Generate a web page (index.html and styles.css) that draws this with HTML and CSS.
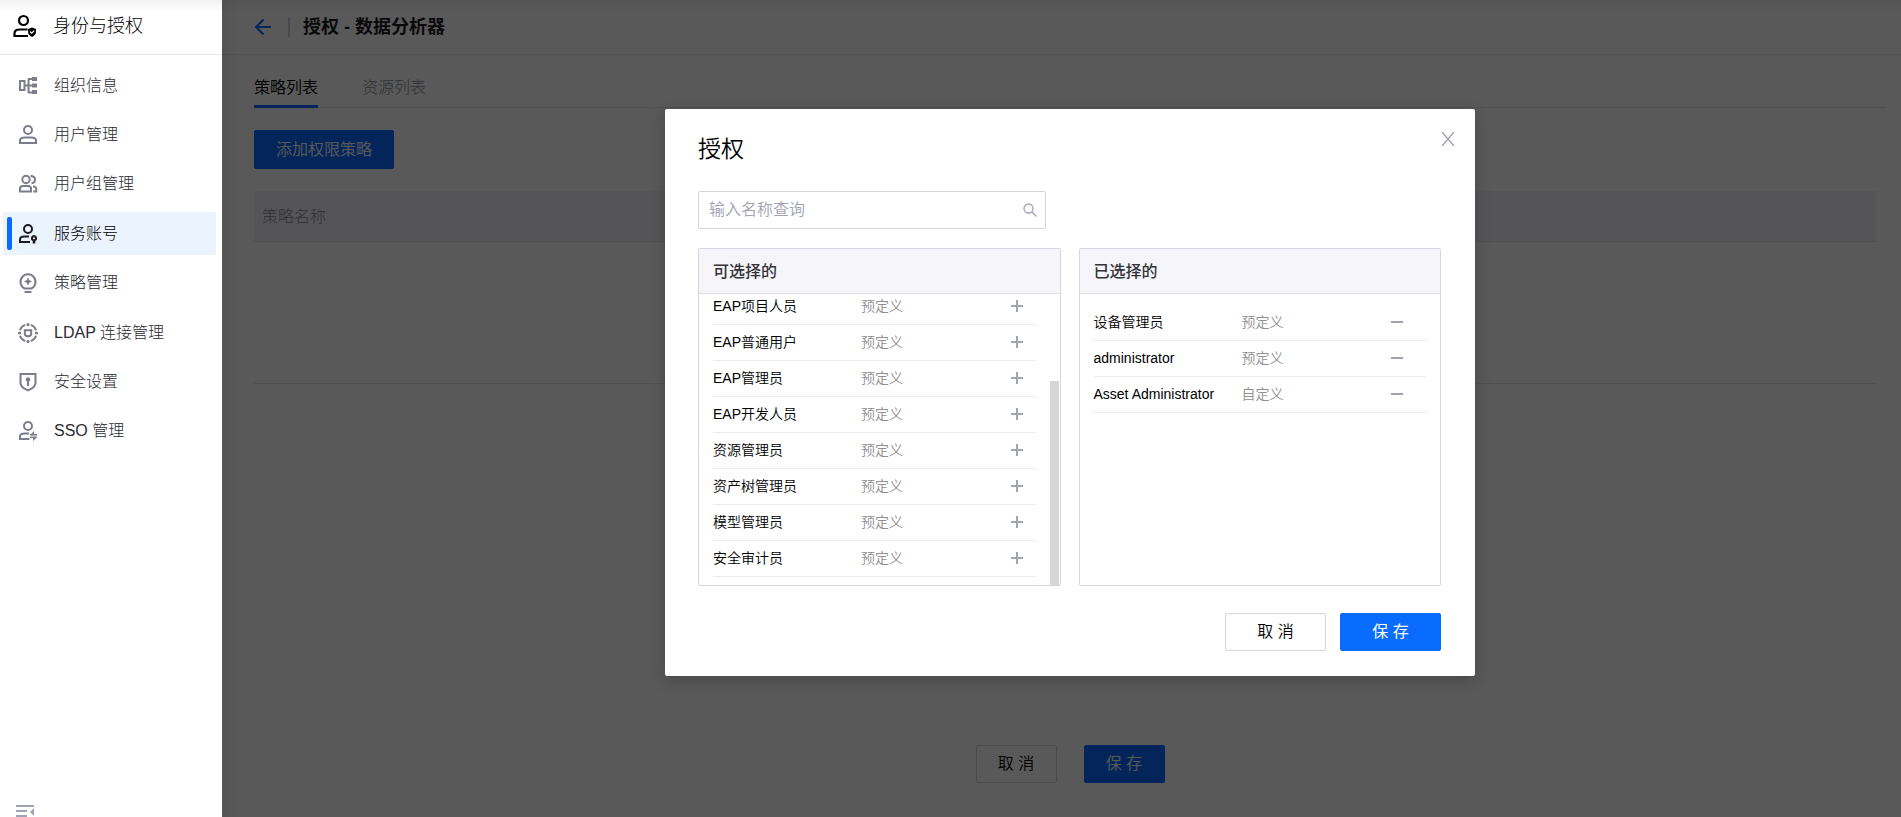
FILE: index.html
```html
<!DOCTYPE html>
<html lang="zh-CN">
<head>
<meta charset="utf-8">
<meta name="viewport" content="width=device-width, initial-scale=1">
<title>授权 - 数据分析器</title>
<link rel="stylesheet" href="styles.css">
</head>
<body>
<svg class="defs" aria-hidden="true">
  <symbol id="i-plus" viewBox="0 0 12 12"><path d="M6 0v12M0 6h12" stroke="currentColor" stroke-width="2" fill="none"/></symbol>
  <symbol id="i-minus" viewBox="0 0 12 12"><path d="M0 6h12" stroke="currentColor" stroke-width="2" fill="none"/></symbol>
</svg>
<div class="app">
  <aside class="sidebar">
    <div class="brand">
      <svg class="brand-icon" viewBox="0 0 24 24" fill="none" stroke="currentColor" stroke-width="2.200">
        <circle cx="10.500" cy="6.500" r="4.500"/>
        <path d="M15 22H1.500v-2.500C1.500 17 3.500 15.500 6.500 15.500h8"/>
        <path d="M19 13.500l4 1.500v2.700c0 2.300-1.500 4.200-4 5.300-2.500-1.100-4-3-4-5.300V15z" fill="currentColor" stroke="none"/>
        <path d="M17 17.500l1.700 1.700 2.600-2.600" stroke="#fff" stroke-width="1.200"/>
      </svg>
      <span>身份与授权</span>
    </div>
    <nav class="menu">
      <a class="item" href="#">
        <svg viewBox="0 0 20 20" fill="none" stroke="currentColor" stroke-width="2">
          <rect x="2" y="5" width="4.500" height="9"/><path d="M6.500 9.500H15M10.500 16.500V3M10 3h5M10 16.500h5"/>
          <path d="M14 1h5v4h-5zM14 7.500h5v4h-5zM14 14h5v4h-5z" fill="currentColor" stroke="none"/>
        </svg><span>组织信息</span></a>
      <a class="item" href="#">
        <svg viewBox="0 0 20 20" fill="none" stroke="currentColor" stroke-width="2">
          <circle cx="10" cy="5" r="4"/><path d="M2 18v-2.500C2 13.500 4 12.500 7 12.500h6c3 0 5 1 5 3V18z"/>
        </svg><span>用户管理</span></a>
      <a class="item" href="#">
        <svg viewBox="0 0 20 20" fill="none" stroke="currentColor" stroke-width="2">
          <circle cx="8" cy="5.500" r="3.700"/><path d="M2 17.500v-3C2 12.800 3.300 12 5 12h5c1.700 0 3 .8 3 2.500v3z"/>
          <path d="M12.500 1.900c3 0 4.500 1.500 4.500 3.600s-1.500 3.600-3.500 3.700M15 12.300c2 .2 3.200 1 3.200 2.700v2.500h-3"/>
        </svg><span>用户组管理</span></a>
      <a class="item active" href="#" aria-current="page">
        <svg viewBox="0 0 20 20" fill="none" stroke="currentColor" stroke-width="2">
          <circle cx="10" cy="5" r="4"/><path d="M12 18H2v-2.500c0-2 2-3 4.500-3H11"/>
          <path d="M16 11a3.200 3.200 0 0 1 1.300 6.100V19.500h-2.600v-2.400A3.200 3.200 0 0 1 16 11z" fill="currentColor" stroke="none"/>
          <circle cx="16" cy="14.200" r="1" fill="#ebf3ff" stroke="none"/>
        </svg><span>服务账号</span></a>
      <a class="item" href="#">
        <svg viewBox="0 0 20 20" fill="none" stroke="currentColor" stroke-width="2">
          <path d="M6.500 15.500a7.500 7.500 0 1 1 7 0z"/><path d="M6.500 19h7"/>
          <path d="M10 5l1.100 2.400L13.500 8.500l-2.400 1.100L10 12 8.900 9.600 6.500 8.500l2.400-1.100z" fill="currentColor" stroke="currentColor" stroke-width=".6"/>
        </svg><span>策略管理</span></a>
      <a class="item" href="#">
        <svg viewBox="0 0 20 20" fill="none" stroke="currentColor" stroke-width="1.900">
          <path d="M12.800 1.900a8.600 8.600 0 0 1 5.300 5.300M18.100 12.800a8.600 8.600 0 0 1-5.300 5.300M7.200 18.100a8.600 8.600 0 0 1-5.300-5.300M1.900 7.200a8.600 8.600 0 0 1 5.300-5.300"/>
          <path d="M6.800 7.200h6.400v3.300c0 1.800-1 2.800-3.200 2.800s-3.200-1-3.200-2.800z" stroke-width="2"/>
          <g fill="currentColor" stroke="none"><circle cx="10" cy="1.600" r="1.600"/><circle cx="18.400" cy="10" r="1.600"/><circle cx="10" cy="18.400" r="1.600"/><circle cx="1.600" cy="10" r="1.600"/></g>
        </svg><span>LDAP 连接管理</span></a>
      <a class="item" href="#">
        <svg viewBox="0 0 20 20" fill="none" stroke="currentColor" stroke-width="2">
          <path d="M2.500 2h15v9c0 3-2.500 5.300-7.500 7.400C5 16.300 2.500 14 2.500 11z"/>
          <circle cx="10" cy="7.500" r="2.200" fill="currentColor" stroke="none"/><path d="M10 8v6"/>
        </svg><span>安全设置</span></a>
      <a class="item" href="#">
        <svg viewBox="0 0 20 20" fill="none" stroke="currentColor" stroke-width="2">
          <circle cx="10" cy="5" r="4"/><path d="M11.500 18H2v-2.500c0-2 2-3 4.500-3H11"/>
          <path d="M19.500 14.200H12L16 10v3M12 15.800h7.500L15 20v-3" fill="currentColor" stroke="none"/>
          <path d="M12 13.800h7M12 16.400h7" stroke-width="1.400"/>
        </svg><span>SSO 管理</span></a>
    </nav>
    <button class="collapse" type="button" aria-label="收起菜单">
      <svg viewBox="0 0 18 12"><path d="M0 1h18M0 6h11M0 11h11" stroke="currentColor" stroke-width="2"/><path d="M18 3v8l-4-4z" fill="currentColor"/></svg>
    </button>
  </aside>

  <main class="main">
    <header class="topbar">
      <a class="back" href="#" aria-label="返回"><svg viewBox="0 0 18 18" fill="none" stroke="currentColor" stroke-width="2"><path d="M17 9H2M9.500 1.500L2 9l7.500 7.500"/></svg></a>
      <h1 class="page-title">授权 - 数据分析器</h1>
    </header>
    <section class="content">
      <div class="tabs">
        <a class="tab current" href="#">策略列表</a>
        <a class="tab" href="#">资源列表</a>
      </div>
      <button class="btn primary add" type="button">添加权限策略</button>
      <table class="policies">
        <thead><tr><th>策略名称</th></tr></thead>
        <tbody><tr><td></td></tr></tbody>
      </table>
      <div class="page-actions">
        <button class="btn" type="button">取 消</button>
        <button class="btn primary" type="button">保 存</button>
      </div>
    </section>

    <div class="overlay">
      <div class="modal" role="dialog" aria-modal="true" aria-labelledby="dlg-title">
        <button class="close" type="button" aria-label="关闭"><svg viewBox="0 0 14 14"><path d="M1 0l12 14M13 0L1 14" stroke="currentColor" stroke-width="1.400"/></svg></button>
        <h2 class="modal-title" id="dlg-title">授权</h2>
        <div class="search">
          <input type="text" placeholder="输入名称查询" aria-label="输入名称查询">
          <svg viewBox="0 0 14 14" fill="none" stroke="currentColor" stroke-width="1.300"><circle cx="5.500" cy="5.500" r="4.500"/><path d="M8.800 8.800L13.500 13.500"/></svg>
        </div>
        <div class="panels">
          <section class="panel">
            <h3 class="panel-head">可选择的</h3>
            <div class="panel-body scrolled">
              <ul class="list">
                <li><span>EAP项目人员</span><span class="kind">预定义</span><button type="button" aria-label="添加"><svg><use href="#i-plus"/></svg></button></li>
                <li><span>EAP普通用户</span><span class="kind">预定义</span><button type="button" aria-label="添加"><svg><use href="#i-plus"/></svg></button></li>
                <li><span>EAP管理员</span><span class="kind">预定义</span><button type="button" aria-label="添加"><svg><use href="#i-plus"/></svg></button></li>
                <li><span>EAP开发人员</span><span class="kind">预定义</span><button type="button" aria-label="添加"><svg><use href="#i-plus"/></svg></button></li>
                <li><span>资源管理员</span><span class="kind">预定义</span><button type="button" aria-label="添加"><svg><use href="#i-plus"/></svg></button></li>
                <li><span>资产树管理员</span><span class="kind">预定义</span><button type="button" aria-label="添加"><svg><use href="#i-plus"/></svg></button></li>
                <li><span>模型管理员</span><span class="kind">预定义</span><button type="button" aria-label="添加"><svg><use href="#i-plus"/></svg></button></li>
                <li><span>安全审计员</span><span class="kind">预定义</span><button type="button" aria-label="添加"><svg><use href="#i-plus"/></svg></button></li>
              </ul>
              <div class="thumb"></div>
            </div>
          </section>
          <section class="panel">
            <h3 class="panel-head">已选择的</h3>
            <div class="panel-body">
              <ul class="list">
                <li><span>设备管理员</span><span class="kind">预定义</span><button type="button" aria-label="移除"><svg><use href="#i-minus"/></svg></button></li>
                <li><span>administrator</span><span class="kind">预定义</span><button type="button" aria-label="移除"><svg><use href="#i-minus"/></svg></button></li>
                <li><span>Asset Administrator</span><span class="kind">自定义</span><button type="button" aria-label="移除"><svg><use href="#i-minus"/></svg></button></li>
              </ul>
            </div>
          </section>
        </div>
        <div class="modal-actions">
          <button class="btn" type="button">取 消</button>
          <button class="btn primary strong" type="button">保 存</button>
        </div>
      </div>
    </div>
  </main>
</div>
</body>
</html>
```
FILE: styles.css
```css
* { box-sizing: border-box; }

body {
  margin: 0;
  color: #000;
  background: #fff;
  font: 300 16px/24px "Liberation Sans", "Noto Sans CJK SC", sans-serif;
}

h1, h2, h3, ul { margin: 0; padding: 0; }
a { color: inherit; text-decoration: none; }
button, input { font: inherit; color: inherit; }
svg { display: block; flex: none; }
.defs { position: absolute; width: 0; height: 0; }

.app { display: flex; min-height: 100vh; }

/* Sidebar */
.sidebar {
  display: flex;
  flex-direction: column;
  flex: none;
  width: 222px;
}
.brand, .topbar {
  display: flex;
  align-items: center;
  height: 55px;
  border-bottom: 1px solid #ebebee;
  background: linear-gradient(#f1f1f1, #fff 12px);
}
.brand {
  gap: 16px;
  padding: 0 0 3px 13px;
  font-size: 18px;
}
.brand-icon { width: 24px; height: 24px; }
.menu {
  display: flex;
  flex-direction: column;
  justify-content: space-between;
  height: 389px;
  margin-top: 9px;
  padding: 0 6px 0 3px;
}
.item {
  display: flex;
  align-items: center;
  gap: 16px;
  height: 43px;
  padding-left: 15px;
  border-radius: 2px;
  color: #2a2a33;
}
.item svg { width: 20px; height: 20px; color: #7c7c8c; }
.item.active { position: relative; background: #ebf3ff; color: #000; }
.item.active svg { color: #1c1c1f; }
.item.active::before {
  content: "";
  position: absolute;
  left: 4px;
  top: 5px;
  bottom: 5px;
  width: 5px;
  border-radius: 2px;
  background: #0a6cff;
}
.collapse {
  margin-top: auto;
  padding: 0 0 0 16px;
  border: 0;
  background: none;
  color: #a2a2b5;
}
.collapse svg { width: 18px; height: 12px; }

/* Page */
.main {
  position: relative;
  display: flex;
  flex-direction: column;
  flex: 1;
  min-width: 0;
}
.topbar { padding: 0 0 1px 32px; }
.back {
  padding-right: 16px;
  border-right: 2px solid #d5d5dd;
  color: #0a6cff;
  line-height: 20px;
}
.back svg { width: 18px; height: 20px; }
.page-title {
  padding-left: 13px;
  color: #1c1c1f;
  font-size: 18px;
  font-weight: 700;
  line-height: 24px;
}
.content {
  display: flex;
  flex-direction: column;
  align-items: flex-start;
  flex: 1;
  padding: 18px 15px 34px 32px;
}
.tabs {
  display: flex;
  gap: 44px;
  align-self: stretch;
  border-bottom: 1px solid #e4e4ea;
}
.tab {
  margin-bottom: -1px;
  padding: 3px 0 5px;
  border-bottom: 3px solid transparent;
  color: #8c8c96;
}
.tab.current { border-color: #0a6cff; color: #000; font-weight: 350; }

.btn {
  height: 38px;
  min-width: 81px;
  padding: 0;
  border: 1px solid #d5d5e0;
  border-radius: 2px;
  background: #fff;
  font-weight: 350;
}
.btn.primary { border-color: #0a6cff; background: #0a6cff; color: #fff; }
.btn.strong { font-weight: 400; }
.btn.add { height: 39px; margin: 22px 0; padding: 1px 21px 0; }

.policies { width: calc(100% - 9px); border-collapse: collapse; }
.policies th {
  height: 50px;
  padding: 2px 8px 0;
  border-bottom: 1px solid #e4e4ea;
  background: #f4f4fb;
  color: #8c8c96;
  font-weight: inherit;
  text-align: left;
}
.policies td { height: 142px; padding: 0; border-bottom: 1px solid #e4e4ea; }
.page-actions { display: flex; gap: 27px; margin: auto auto 0; }

/* Dialog */
.overlay {
  position: absolute;
  inset: 0;
  display: flex;
  align-items: flex-start;
  justify-content: center;
  padding: 109px 15px 0 32px;
  background: linear-gradient(90deg, rgba(0, 0, 0, .05), transparent 20px), rgba(0, 0, 0, .65);
}
.modal {
  position: relative;
  width: 810px;
  padding: 24px 34px 25px 33px;
  border-radius: 2px;
  background: #fff;
  box-shadow: 0 4px 16px rgba(0, 0, 0, .2);
}
.close {
  position: absolute;
  top: 23px;
  right: 20px;
  padding: 0;
  border: 0;
  background: none;
  color: #a2a2b5;
}
.close svg { width: 14px; height: 14px; }
.modal-title { font-size: 23px; font-weight: 350; line-height: 32px; }
.search {
  display: flex;
  align-items: center;
  width: 348px;
  height: 38px;
  margin-top: 26px;
  padding: 0 8px 0 10px;
  border: 1px solid #d5d5e0;
  border-radius: 2px;
  color: #a2a2b5;
}
.search input {
  flex: 1;
  min-width: 0;
  padding: 0;
  border: 0;
  outline: 0;
  background: none;
  color: #111114;
  font-weight: 350;
}
.search input::placeholder { color: #a2a2b5; opacity: 1; }
.search svg { width: 14px; height: 14px; }

.panels {
  display: grid;
  grid-template-columns: 1fr 1fr;
  gap: 18px;
  margin-top: 19px;
}
.panel {
  display: flex;
  flex-direction: column;
  height: 338px;
  border: 1px solid #d5d5e0;
  border-radius: 2px;
}
.panel-head {
  padding: 11px 14px 9px;
  border-bottom: 1px solid #dfdfe8;
  background: #f5f5fa;
  color: #333338;
  font-size: 16px;
  font-weight: 500;
}
.panel-body {
  position: relative;
  flex: 1;
  min-height: 0;
  padding: 11px 14px 8px;
}
.panel-body.scrolled {
  display: flex;
  flex-direction: column;
  justify-content: flex-end;
  overflow: hidden;
  padding-right: 24px;
}
.thumb {
  position: absolute;
  right: 1px;
  bottom: 0;
  width: 9px;
  height: 70%;
  background: #d6d6d6;
}
.list { list-style: none; font-size: 14px; }
.list li {
  display: grid;
  grid-template-columns: 148px 1fr 12px;
  align-items: center;
  height: 36px;
  padding: 0 23px 2px 0;
  border-bottom: 1px solid #ececef;
  color: #000;
  font-weight: 350;
}
.scrolled .list li { padding-right: 13px; }
.list .kind { color: #8f8f8f; }
.list button {
  padding: 0;
  border: 0;
  background: none;
  color: #a2a2b5;
}
.list svg { width: 12px; height: 12px; }

.modal-actions {
  display: flex;
  justify-content: flex-end;
  gap: 14px;
  margin-top: 27px;
}
.modal-actions .btn { min-width: 101px; }
```
